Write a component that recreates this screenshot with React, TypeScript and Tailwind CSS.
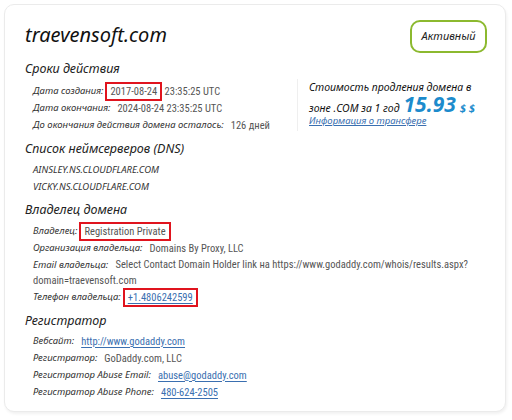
import React from "react";

const head = "font-['Noto_Sans',sans-serif] italic";
const body = "font-['Roboto_Condensed','Liberation_Sans_Narrow','DejaVu_Sans_Condensed',Roboto,sans-serif]";

const Row: React.FC<{ label: string; children: React.ReactNode; className?: string }> = ({ label, children, className }) => (
    <div className={`flex items-center gap-[7px] h-[17px] ${className ?? ""}`}>
        <span className={`${head} text-[9.5px] text-[#333] whitespace-nowrap`}>{label}</span>
        <span className={`${body} text-[10.5px] text-[#555] whitespace-nowrap`}>{children}</span>
    </div>
);

const Mark: React.FC<{ children: React.ReactNode }> = ({ children }) => (
    <span className="-ml-[5px] border-2 border-[#e0141e] px-[3px] py-[1px]">{children}</span>
);

const Link: React.FC<{ children: React.ReactNode }> = ({ children }) => (
    <span className="text-[#3a6fb0] underline underline-offset-2">{children}</span>
);

const Heading: React.FC<{ children: React.ReactNode }> = ({ children }) => (
    <h2 className={`${head} text-[12.5px] text-[#222] leading-[20px]`}>{children}</h2>
);

export default function App() {
    return (
        <div className="w-[512px] h-[420px] bg-white p-[4px]">
            <div className="w-[502px] h-[408px] rounded-[10px] border border-[#ebebeb] shadow-[1px_2px_3px_rgba(0,0,0,0.06)] bg-white pl-[20px] pr-[18px] pt-[15px]">
                <div className="flex items-start justify-between">
                    <h1 className={`${head} text-[20px] leading-[30px] text-[#111]`}>traevensoft.com</h1>
                    <div className="h-[33px] w-[77px] rounded-[10px] border-2 border-[#8cb92f] flex items-center justify-center">
                        <span className={`${head} text-[11px] text-[#222]`}>Активный</span>
                    </div>
                </div>

                <div className="flex mt-[6px]">
                    <div className="w-[272px]">
                        <Heading>Сроки действия</Heading>
                        <div className="pl-[8px] mt-[4px]">
                            <Row label="Дата создания:"><Mark>2017-08-24</Mark> 23:35:25 UTC</Row>
                            <Row label="Дата окончания:">2024-08-24 23:35:25 UTC</Row>
                            <Row label="До окончания действия домена осталось:">126 дней</Row>
                        </div>
                    </div>
                    <div className="mt-[20px] border-l border-[#efefef] pl-[11px] h-[52px]">
                        <p className={`${head} text-[10.5px] text-[#111] leading-[17px]`}>Стоимость продления домена в</p>
                        <div className="flex items-baseline gap-[4px] h-[17px]">
                            <span className={`${head} text-[10.5px] text-[#111] leading-[17px]`}>зоне .COM за 1 год</span>
                            <span className="font-['Noto_Sans',sans-serif] italic font-bold text-[21px] text-[#1c8bcc] leading-[17px]">15.93</span>
                            <span className="font-['Noto_Sans',sans-serif] italic font-bold text-[11px] text-[#1c8bcc] leading-[17px]">$ $</span>
                        </div>
                        <p className={`${head} text-[9.5px] leading-[16px] text-[#3a6fb0] underline`}>Информация о трансфере</p>
                    </div>
                </div>

                <div className="mt-[5px]">
                    <Heading>Список неймсерверов (DNS)</Heading>
                    <div className={`pl-[8px] mt-[2px] ${head} text-[9.5px] leading-[17px] text-[#333]`}>
                        <div>AINSLEY.NS.CLOUDFLARE.COM</div>
                        <div>VICKY.NS.CLOUDFLARE.COM</div>
                    </div>
                </div>

                <div className="mt-[5px]">
                    <Heading>Владелец домена</Heading>
                    <div className="pl-[8px] mt-[3px]">
                        <Row label="Владелец:"><Mark>Registration Private</Mark></Row>
                        <Row label="Организация владельца:">Domains By Proxy, LLC</Row>
                        <p className={`w-[440px] text-[10.5px] leading-[16px] ${body}`}>
                            <span className={`${head} text-[9.5px] leading-[16px] text-[#333]`}>Email владельца:</span>
                            <span className="text-[#555]">&nbsp;&nbsp; Select Contact Domain Holder link на https://www.godaddy.com/whois/results.aspx? domain=traevensoft.com</span>
                        </p>
                        <Row label="Телефон владельца:"><Mark><Link>+1.4806242599</Link></Mark></Row>
                    </div>
                </div>

                <div className="mt-[5px]">
                    <Heading>Регистратор</Heading>
                    <div className="pl-[8px] mt-[2px]">
                        <Row label="Вебсайт:"><Link>http://www.godaddy.com</Link></Row>
                        <Row label="Регистратор:">GoDaddy.com, LLC</Row>
                        <Row label="Регистратор Abuse Email:"><Link>abuse@godaddy.com</Link></Row>
                        <Row label="Регистратор Abuse Phone:"><Link>480-624-2505</Link></Row>
                    </div>
                </div>
            </div>
        </div>
    );
}
